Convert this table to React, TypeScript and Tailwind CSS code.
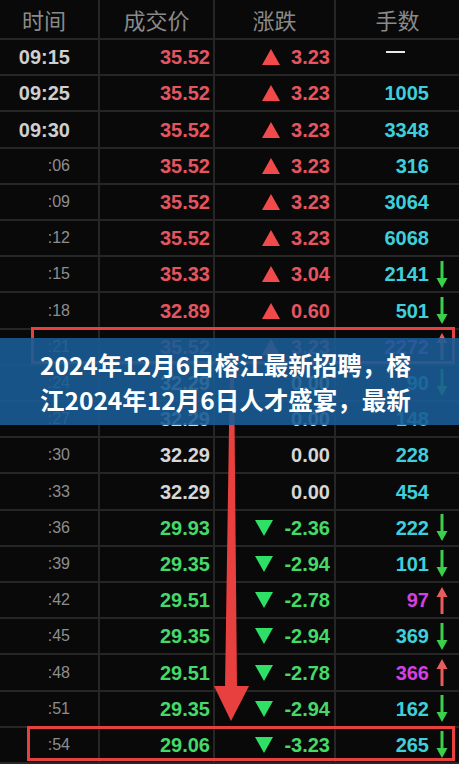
type Tone = "red" | "green" | "white";
type Vol = "cyan" | "magenta";

type Row = {
  time: string;
  full?: boolean;
  price: string;
  change: string;
  tone: Tone;
  vol: string;
  volTone?: Vol;
  arrow?: "up" | "down";
};

const rows: Row[] = [
  { time: "09:15", full: true, price: "35.52", change: "3.23", tone: "red", vol: "" },
  { time: "09:25", full: true, price: "35.52", change: "3.23", tone: "red", vol: "1005" },
  { time: "09:30", full: true, price: "35.52", change: "3.23", tone: "red", vol: "3348" },
  { time: ":06", price: "35.52", change: "3.23", tone: "red", vol: "316" },
  { time: ":09", price: "35.52", change: "3.23", tone: "red", vol: "3064" },
  { time: ":12", price: "35.52", change: "3.23", tone: "red", vol: "6068" },
  { time: ":15", price: "35.33", change: "3.04", tone: "red", vol: "2141", arrow: "down" },
  { time: ":18", price: "32.89", change: "0.60", tone: "red", vol: "501", arrow: "down" },
  { time: ":21", price: "35.52", change: "3.23", tone: "red", vol: "2272", volTone: "magenta", arrow: "up" },
  { time: ":24", price: "32.29", change: "0.00", tone: "white", vol: "90", arrow: "down" },
  { time: ":27", price: "32.29", change: "0.00", tone: "white", vol: "148" },
  { time: ":30", price: "32.29", change: "0.00", tone: "white", vol: "228" },
  { time: ":33", price: "32.29", change: "0.00", tone: "white", vol: "454" },
  { time: ":36", price: "29.93", change: "-2.36", tone: "green", vol: "222", arrow: "down" },
  { time: ":39", price: "29.35", change: "-2.94", tone: "green", vol: "101", arrow: "down" },
  { time: ":42", price: "29.51", change: "-2.78", tone: "green", vol: "97", volTone: "magenta", arrow: "up" },
  { time: ":45", price: "29.35", change: "-2.94", tone: "green", vol: "369", arrow: "down" },
  { time: ":48", price: "29.51", change: "-2.78", tone: "green", vol: "366", volTone: "magenta", arrow: "up" },
  { time: ":51", price: "29.35", change: "-2.94", tone: "green", vol: "162", arrow: "down" },
  { time: ":54", price: "29.06", change: "-3.23", tone: "green", vol: "265", arrow: "down" },
];

const toneText: Record<Tone, string> = {
  red: "text-[#e5555f]",
  green: "text-[#45d968]",
  white: "text-[#d6d6d6]",
};

function Triangle({ up }: { up: boolean }) {
  return (
    <svg width="18" height="16" viewBox="0 0 18 16">
      {up ? (
        <polygon points="9,0 18,16 0,16" fill="#f24a4a" />
      ) : (
        <polygon points="0,0 18,0 9,16" fill="#2fe066" />
      )}
    </svg>
  );
}

function VolArrow({ dir }: { dir: "up" | "down" }) {
  if (dir === "down") {
    return (
      <svg width="12" height="27" viewBox="0 0 12 27">
        <rect x="4.5" y="0" width="3" height="20" fill="#3ccf4c" />
        <polygon points="0.5,17 11.5,17 6,27" fill="#3ccf4c" />
      </svg>
    );
  }
  return (
    <svg width="12" height="27" viewBox="0 0 12 27">
      <polygon points="6,0 11.5,10 0.5,10" fill="#e85c5c" />
      <rect x="4.5" y="7" width="3" height="20" fill="#e85c5c" />
    </svg>
  );
}

function TickRow({ r }: { r: Row }) {
  const num = "font-['Liberation_Sans',Arial,sans-serif] font-bold text-[20px] leading-none";
  return (
    <div className="flex-1 grid grid-cols-[100px_115px_121px_123px] border-b-2 border-[#262626]">
      <div className="flex items-center justify-end pr-[28px] border-r-2 border-[#262626]">
        {r.full ? (
          <span className={`${num} text-[19px] text-[#cfcfcf]`}>{r.time}</span>
        ) : (
          <span className="font-['Liberation_Sans',Arial,sans-serif] text-[16px] leading-none text-[#8e8e8e]">
            {r.time}
          </span>
        )}
      </div>
      <div className="flex items-center justify-end pr-[3px] border-r-2 border-[#262626]">
        <span className={`${num} ${toneText[r.tone]}`}>{r.price}</span>
      </div>
      <div className="flex items-center justify-end gap-[11px] pr-[4px] border-r-2 border-[#262626]">
        {r.tone !== "white" && <Triangle up={r.tone === "red"} />}
        <span className={`${num} ${toneText[r.tone]}`}>{r.change}</span>
      </div>
      <div className="flex items-center justify-end pr-[4px]">
        {r.vol === "" ? (
          <div className="w-[19px] h-[2px] bg-[#e8e8e8] mb-[10px] mr-[24px]" />
        ) : (
          <span
            className={`${num} ${r.volTone === "magenta" ? "text-[#d63fe0]" : "text-[#3fcfdc]"}`}
          >
            {r.vol}
          </span>
        )}
        <div className="w-[26px] flex justify-center">
          {r.arrow && <VolArrow dir={r.arrow} />}
        </div>
      </div>
    </div>
  );
}

export default function App() {
  return (
    <div className="relative w-[459px] h-[764px] overflow-hidden bg-[#090909]">
      <div className="flex flex-col h-full">
        <div className="h-[40px] shrink-0 grid grid-cols-[100px_115px_121px_123px] border-b-2 border-[#262626] text-[22px] text-[#8a8a8a] font-['Noto_Sans_CJK_SC',sans-serif]">
          <div className="flex items-center justify-center pr-[10px] border-r-2 border-[#262626]">时间</div>
          <div className="flex items-center justify-center border-r-2 border-[#262626]">成交价</div>
          <div className="flex items-center justify-center border-r-2 border-[#262626]">涨跌</div>
          <div className="flex items-center justify-center">手数</div>
        </div>
        {rows.map((r) => (
          <TickRow key={r.time} r={r} />
        ))}
      </div>

      {/* annotations */}
      <div className="absolute left-[31px] top-[327px] w-[424px] h-[37px] border-[3px] border-[#e8403f]" />
      <div className="absolute left-[27px] top-[726px] w-[428px] h-[35px] border-[3px] border-[#e8403f]" />
      <svg className="absolute left-0 top-0" width="459" height="764" viewBox="0 0 459 764">
        <polygon points="230,363 234,363 237,688 225,688" fill="#e8403f" />
        <polygon points="214,686 249,686 231,721" fill="#e8403f" />
      </svg>

      <div className="absolute left-0 top-[338px] w-[459px] h-[87px] bg-[#1a5c95]/90 pt-[9px] pl-[40px] font-['Noto_Sans_CJK_SC',sans-serif] font-bold text-[24.5px] leading-[35px] text-white">
        <p className="w-[415px] whitespace-nowrap">2024年12月6日榕江最新招聘，榕</p>
        <p className="w-[415px] whitespace-nowrap">江2024年12月6日人才盛宴，最新</p>
      </div>
    </div>
  );
}
